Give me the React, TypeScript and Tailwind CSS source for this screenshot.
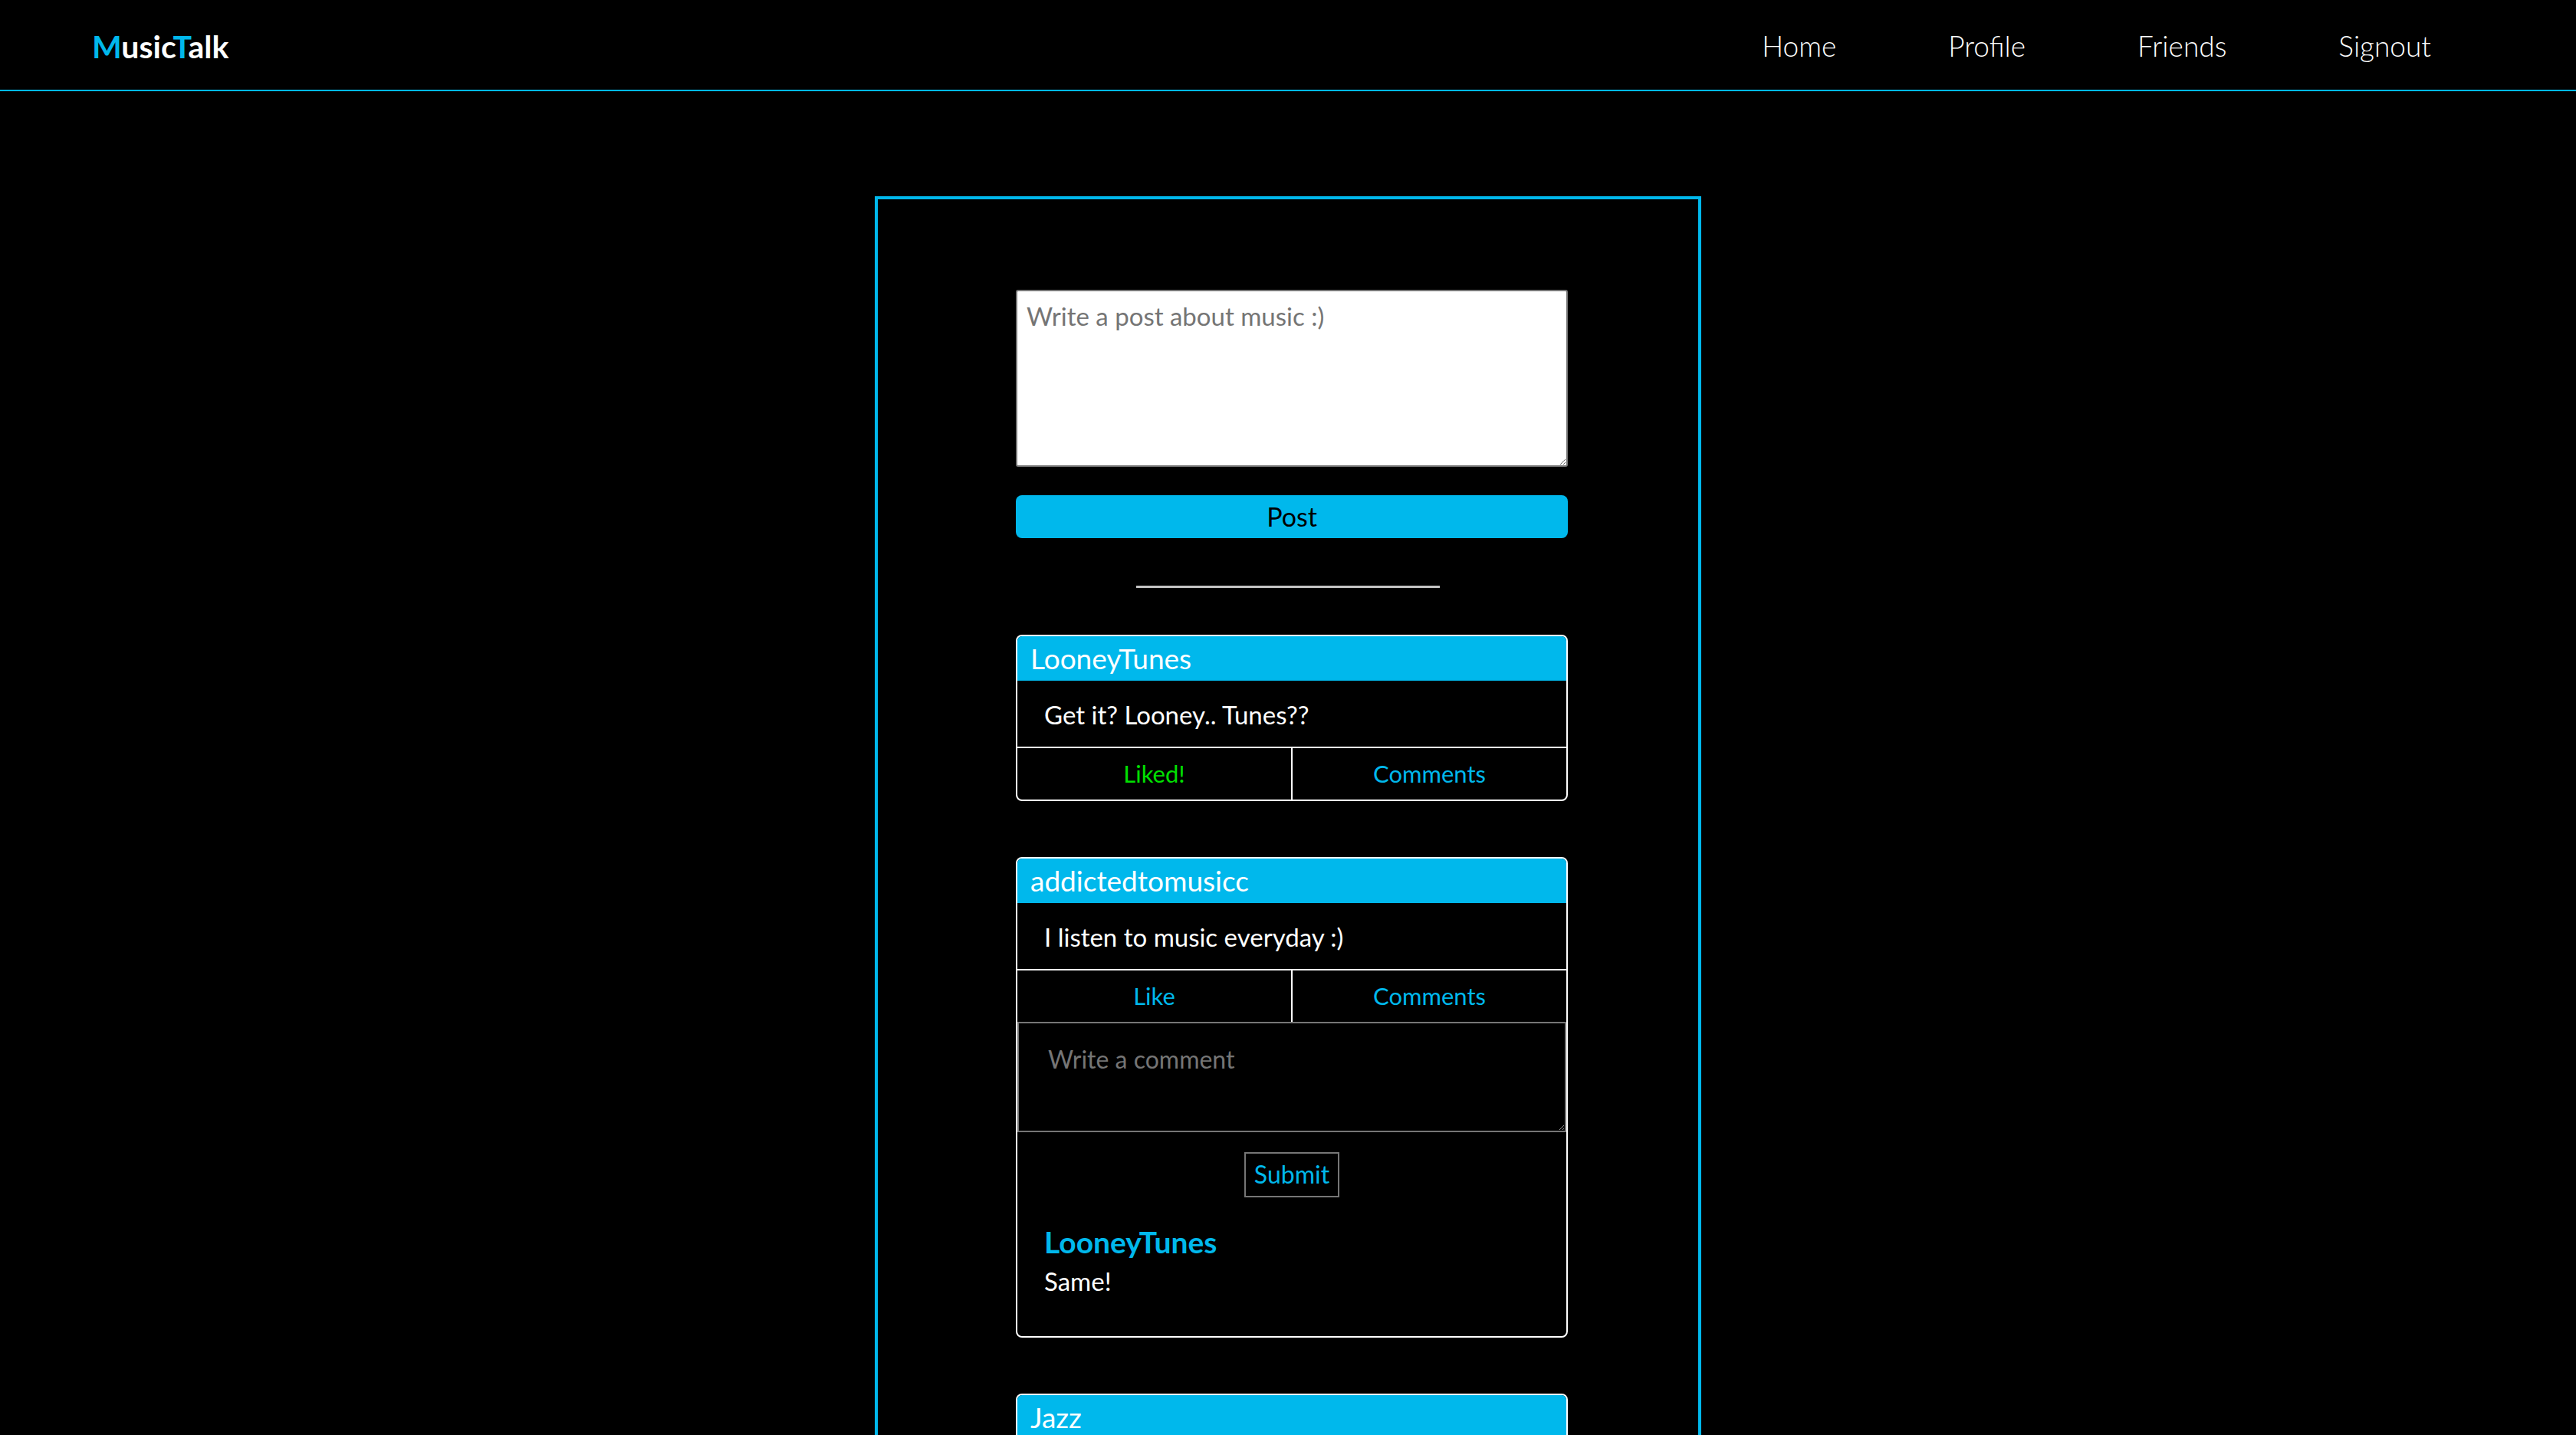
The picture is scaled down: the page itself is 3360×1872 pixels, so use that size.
import { useState } from "react";

type PostData = {
  user: string;
  text: string;
  liked: boolean;
  showComments: boolean;
  comments: { user: string; text: string }[];
};

const posts: PostData[] = [
  { user: "LooneyTunes", text: "Get it? Looney.. Tunes??", liked: true, showComments: false, comments: [] },
  {
    user: "addictedtomusicc",
    text: "I listen to music everyday :)",
    liked: false,
    showComments: true,
    comments: [{ user: "LooneyTunes", text: "Same!" }],
  },
  { user: "Jazz", text: "Jazz is the best genre", liked: false, showComments: false, comments: [] },
];

function PostCard({ post }: { post: PostData }) {
  const [comment, setComment] = useState("");

  return (
    <div className="w-[720px] ml-[10px] border-2 border-white rounded-[8px] overflow-hidden">
      <div className="h-[58px] flex items-center pl-[17px] bg-[#00b8ec] text-white text-[37px] leading-[1.2]">{post.user}</div>
      <div className="h-[86px] flex items-center px-[35px] pt-[3px] text-white text-[33px] leading-[1.2]">{post.text}</div>
      <div className="flex h-[69px] border-t-2 border-white text-[31px] leading-[1.2]">
        <button className={"flex-1 border-r-2 border-white " + (post.liked ? "text-[#00e000]" : "text-[#00b8ec]")}>
          {post.liked ? "Liked!" : "Like"}
        </button>
        <button className="flex-1 text-[#00b8ec]">Comments</button>
      </div>

      {post.showComments && (
        <div className="flex flex-col">
          <textarea
            value={comment}
            onChange={(event) => setComment(event.target.value)}
            placeholder="Write a comment"
            className="block w-full h-[144px] bg-black border-2 border-[#767676] pl-[38px] pt-[23px] text-[32px] leading-[1.5] text-white placeholder:text-[#757575] outline-none"
          />
          <button className="self-center mt-[26px] w-[124px] h-[59px] border-2 border-[#767676] text-[#00b8ec] text-[32px] leading-[1.2]">
            Submit
          </button>
          <div className="flex flex-col px-[35px] pb-[52px]">
            {post.comments.map((c, i) => (
              <div key={i} className="flex flex-col">
                <span className="mt-[35px] text-[39px] leading-[1.2] font-bold text-[#00b8ec]">{c.user}</span>
                <span className="mt-[8px] text-[33px] leading-[1.2] text-white">{c.text}</span>
              </div>
            ))}
          </div>
        </div>
      )}
    </div>
  );
}

function App() {
  const [draft, setDraft] = useState("");

  return (
    <div className="min-h-screen bg-black font-['Lato','Open_Sans',sans-serif] pb-[120px]">
      <div className="h-[119px] flex items-center justify-between pl-[120px] pr-[189px] pt-[4px] border-b-2 border-[#00b8ec]">
        <span className="text-[41px] leading-[1.2] font-bold text-white">
          <span className="text-[#00b8ec]">M</span>usic<span className="text-[#00b8ec]">T</span>alk
        </span>
        <nav className="flex gap-[146px] text-[37px] leading-[1.2] font-light text-white">
          <a href="#">Home</a>
          <a href="#">Profile</a>
          <a href="#">Friends</a>
          <a href="#">Signout</a>
        </nav>
      </div>

      <div className="w-[1078px] mx-auto mt-[137px] border-4 border-[#00b8ec] flex flex-col items-center pt-[118px] pb-[80px]">
        <textarea
          value={draft}
          onChange={(event) => setDraft(event.target.value)}
          placeholder="Write a post about music :)"
          className="block ml-[10px] w-[720px] h-[231px] bg-white border-2 border-[#767676] rounded-[3px] pl-[12px] pt-[8px] text-[33px] leading-[1.5] text-black placeholder:text-[#757575] outline-none"
        />
        <button className="ml-[10px] mt-[37px] w-[720px] h-[56px] bg-[#00b8ec] rounded-[8px] text-[34px] leading-[1.2] text-black">
          Post
        </button>

        <div className="mt-[62px] w-[396px] h-[3px] bg-[#c4c4c4]"></div>

        <div className="mt-[61px] flex flex-col gap-[73px]">
          {posts.map((p, i) => (
            <PostCard key={i} post={p} />
          ))}
        </div>
      </div>
    </div>
  );
}

export default App;
